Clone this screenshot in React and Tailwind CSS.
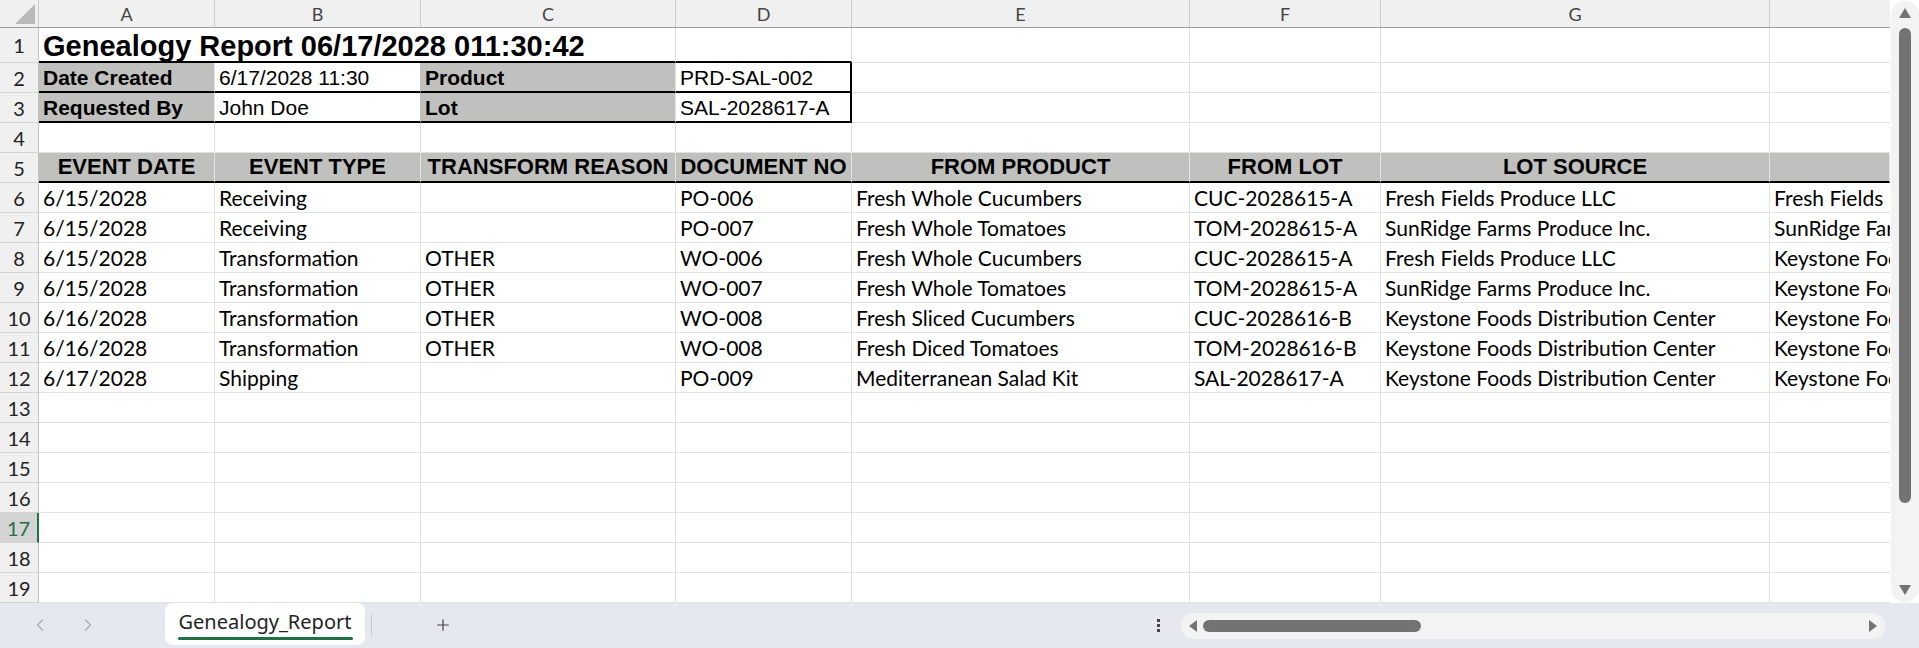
import { ChevronLeft, ChevronRight, Plus } from "lucide-react";

// row header + columns A..H (H is cut off by the scrollbar)
const GRID = "grid grid-cols-[39px_176px_206px_255px_176px_338px_191px_389px_120px] grid-rows-[100%] overflow-hidden";

const LETTERS = ["A", "B", "C", "D", "E", "F", "G", ""];

const HEADERS = [
  "EVENT DATE",
  "EVENT TYPE",
  "TRANSFORM REASON",
  "DOCUMENT NO",
  "FROM PRODUCT",
  "FROM LOT",
  "LOT SOURCE",
  "",
];

const EVENTS = [
  ["6/15/2028", "Receiving", "", "PO-006", "Fresh Whole Cucumbers", "CUC-2028615-A", "Fresh Fields Produce LLC", "Fresh Fields Produce LLC"],
  ["6/15/2028", "Receiving", "", "PO-007", "Fresh Whole Tomatoes", "TOM-2028615-A", "SunRidge Farms Produce Inc.", "SunRidge Farms Produce Inc."],
  ["6/15/2028", "Transformation", "OTHER", "WO-006", "Fresh Whole Cucumbers", "CUC-2028615-A", "Fresh Fields Produce LLC", "Keystone Foods Distribution Center"],
  ["6/15/2028", "Transformation", "OTHER", "WO-007", "Fresh Whole Tomatoes", "TOM-2028615-A", "SunRidge Farms Produce Inc.", "Keystone Foods Distribution Center"],
  ["6/16/2028", "Transformation", "OTHER", "WO-008", "Fresh Sliced Cucumbers", "CUC-2028616-B", "Keystone Foods Distribution Center", "Keystone Foods Distribution Center"],
  ["6/16/2028", "Transformation", "OTHER", "WO-008", "Fresh Diced Tomatoes", "TOM-2028616-B", "Keystone Foods Distribution Center", "Keystone Foods Distribution Center"],
  ["6/17/2028", "Shipping", "", "PO-009", "Mediterranean Salad Kit", "SAL-2028617-A", "Keystone Foods Distribution Center", "Keystone Foods Distribution Center"],
];

const ARIAL = "font-['Liberation_Sans',Arial,sans-serif]";
const GRAY = "bg-[#c0c1be] border-[#c0c1be]";

function RowNum({ n, active }) {
  return (
    <div
      className={
        "flex items-center justify-center border-b border-[#d4d4d4] text-[20px] leading-none font-['Lato',sans-serif] " +
        (active
          ? "bg-[#d3d3d3] text-[#1e7145] border-r-2 border-r-[#1e7145]"
          : "bg-[#f0f0f0] text-[#222] border-r border-r-[#c4c4c4]")
      }
    >
      {n}
    </div>
  );
}

function Cell({ children, className = "" }) {
  return (
    <div
      className={
        "flex items-center px-[4px] leading-none whitespace-nowrap overflow-hidden border-r border-b border-[#e1e1e1] " + className
      }
    >
      {children}
    </div>
  );
}

function ColumnHeader() {
  return (
    <div className={`${GRID} h-[28px] bg-[#f0f0f0] border-b border-[#9f9f9f]`}>
      <div className="relative border-r border-[#cfcfcf]">
        <svg className="absolute right-[3px] bottom-[3px]" width="20" height="20" viewBox="0 0 20 20">
          <polygon points="20,0 20,20 0,20" fill="#b9b9b9" />
        </svg>
      </div>
      {LETTERS.map((l, i) => (
        <div
          key={i}
          className={
            "flex items-center justify-center text-[18px] leading-none text-[#444] font-['Lato',sans-serif] " +
            (i < 7 ? "border-r border-[#cfcfcf]" : "")
          }
        >
          {l}
        </div>
      ))}
    </div>
  );
}

function Sheet() {
  return (
    <div className="flex-1 flex flex-col text-black">
      <ColumnHeader />

      {/* title row, text runs over A..C */}
      <div className={`${GRID} h-[35px]`}>
        <RowNum n={1} />
        <div className={`col-span-3 flex items-center px-[4px] pt-[3px] leading-none border-b-2 border-b-black border-r border-r-[#e1e1e1] whitespace-nowrap font-bold text-[29px] ${ARIAL}`}>
          Genealogy Report 06/17/2028 011:30:42
        </div>
        <Cell className="border-b-2 border-b-black" />
        <Cell />
        <Cell />
        <Cell />
        <Cell className="border-r-0" />
      </div>

      {/* report info box */}
      {[
        ["Date Created", "6/17/2028 11:30", "Product", "PRD-SAL-002"],
        ["Requested By", "John Doe", "Lot", "SAL-2028617-A"],
      ].map((r, i) => (
        <div key={i} className={`${GRID} h-[30px] ${ARIAL}`}>
          <RowNum n={i + 2} />
          <Cell className={`${GRAY} border-b-2 border-b-black font-bold text-[21px]`}>{r[0]}</Cell>
          <Cell className="border-b-2 border-b-black border-r-[#c0c1be] text-[21px]">{r[1]}</Cell>
          <Cell className={`${GRAY} border-b-2 border-b-black font-bold text-[21px]`}>{r[2]}</Cell>
          <Cell className="border-b-2 border-b-black border-r-2 border-r-black text-[21px]">{r[3]}</Cell>
          <Cell />
          <Cell />
          <Cell />
          <Cell className="border-r-0" />
        </div>
      ))}

      {/* blank row 4 */}
      <div className={`${GRID} h-[30px]`}>
        <RowNum n={4} />
        {LETTERS.map((_, i) => (
          <Cell key={i} className={i === 7 ? "border-r-0" : ""} />
        ))}
      </div>

      {/* column titles */}
      <div className={`${GRID} h-[30px] ${ARIAL}`}>
        <RowNum n={5} />
        {HEADERS.map((h, i) => (
          <Cell key={i} className={`${GRAY} border-b-2 border-b-black justify-center font-bold text-[22px]`}>
            {h}
          </Cell>
        ))}
      </div>

      {/* events */}
      {EVENTS.map((r, i) => (
        <div key={i} className={`${GRID} h-[30px] font-['Lato',sans-serif] text-[21px]`}>
          <RowNum n={i + 6} />
          {r.map((v, j) => (
            <Cell key={j} className={j === 7 ? "border-r-0" : ""}>
              {v}
            </Cell>
          ))}
        </div>
      ))}

      {/* empty rows */}
      {[13, 14, 15, 16, 17, 18, 19].map((n) => (
        <div key={n} className={`${GRID} h-[30px]`}>
          <RowNum n={n} active={n === 17} />
          {LETTERS.map((_, i) => (
            <Cell key={i} className={i === 7 ? "border-r-0" : ""} />
          ))}
        </div>
      ))}
    </div>
  );
}

function VScroll() {
  return (
    <div className="w-[29px] bg-white py-[1px] pl-[1px]">
      <div className="h-full rounded-full bg-[#f3f3f3] flex flex-col items-center pt-[7px] pb-[7px]">
        <svg width="12" height="10" viewBox="0 0 12 10">
          <polygon points="6,0 12,10 0,10" fill="#737373" />
        </svg>
        <div className="w-[12px] h-[475px] mt-[10px] rounded-full bg-[#737373]" />
        <div className="flex-1" />
        <svg width="12" height="10" viewBox="0 0 12 10">
          <polygon points="0,0 12,0 6,10" fill="#737373" />
        </svg>
      </div>
    </div>
  );
}

function TabBar() {
  return (
    <div className="h-[45px] bg-[#e5e8ee] flex items-start font-['Noto_Sans',sans-serif]">
      <div className="flex items-center h-[44px] pl-[30px] gap-[28px] text-[#a9acb1]">
        <ChevronLeft size={20} strokeWidth={1.5} />
        <ChevronRight size={20} strokeWidth={1.5} />
      </div>
      <div className="ml-[67px] w-[200px] h-[42px] bg-white rounded-lg flex flex-col items-center justify-center">
        <span className="text-[20px] leading-none text-[#242424] pt-[3px]">Genealogy_Report</span>
        <span className="mt-[5px] w-[175px] h-[3px] rounded-full bg-[#1e7145]" />
      </div>
      <div className="ml-[6px] mt-[11px] w-px h-[22px] bg-[#c9ccd1]" />
      <div className="ml-[62px] h-[44px] flex items-center text-[#444]">
        <Plus size={18} strokeWidth={1.6} />
      </div>
      <div className="flex-1" />
      <div className="h-[44px] flex flex-col justify-center gap-[2px] mr-[21px]">
        <span className="w-[3px] h-[3px] bg-[#444]" />
        <span className="w-[3px] h-[3px] bg-[#444]" />
        <span className="w-[3px] h-[3px] bg-[#444]" />
      </div>
      <div className="mt-[10px] mr-[34px] w-[704px] h-[26px] rounded-full bg-[#f3f3f3] flex items-center px-[8px]">
        <svg width="8" height="12" viewBox="0 0 8 12">
          <polygon points="8,0 8,12 0,6" fill="#737373" />
        </svg>
        <div className="ml-[6px] w-[218px] h-[12px] rounded-full bg-[#737373]" />
        <div className="flex-1" />
        <svg width="8" height="12" viewBox="0 0 8 12">
          <polygon points="0,0 8,6 0,12" fill="#737373" />
        </svg>
      </div>
    </div>
  );
}

export default function App() {
  return (
    <div className="w-[1919px] h-[648px] flex flex-col bg-white overflow-hidden">
      <div className="h-[603px] flex">
        <Sheet />
        <VScroll />
      </div>
      <TabBar />
    </div>
  );
}
